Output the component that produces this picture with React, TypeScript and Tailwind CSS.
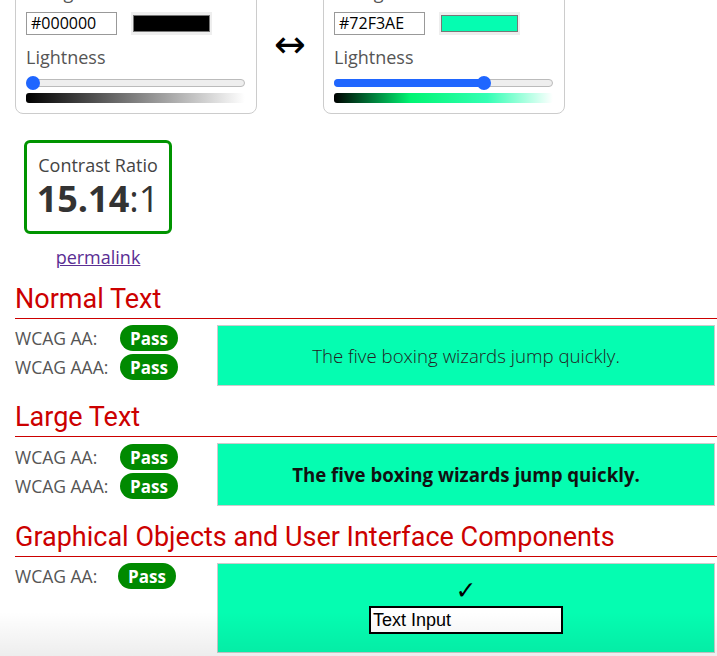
import type { ReactNode } from 'react';

const MINT = '#05fdb1';

function ColorCard({ label, hex, swatch, thumb, filled, gradient }: { label: string; hex: string; swatch: string; thumb: number; filled: boolean; gradient: string }) {
  return (
    <div className="w-[242px] rounded-lg border border-[#cccccc] px-[10px] pb-[10px] pt-[8px]">
      <div className="h-[24px] text-[18px] leading-[24px] text-[#555]">{label}</div>
      <div className="mt-[8px] flex items-center">
        <div className="h-[23px] w-[91px] border border-[#999] pl-[4px] text-[16px] leading-[21px] text-black">{hex}</div>
        <div className="ml-[14px] flex h-[23px] w-[81px] items-center justify-center bg-[#eeeeee]">
          <div className="h-[17px] w-[77px] border border-[#777]" style={{ backgroundColor: swatch }} />
        </div>
      </div>
      <div className="mt-[10px] h-[24px] text-[18px] leading-[24px] text-[#555]">Lightness</div>
      <div className="relative mt-[7px] h-[14px] w-[219px]">
        <div className="absolute left-0 right-0 top-[3px] h-[8px] rounded-full border border-[#bbbbbb] bg-[#eeeeee]" />
        {filled && <div className="absolute left-0 top-[3px] h-[8px] rounded-full bg-[#1f66ff]" style={{ width: thumb }} />}
        <div className="absolute top-0 h-[14px] w-[14px] rounded-full bg-[#1f66ff]" style={{ left: thumb - 7 }} />
      </div>
      <div className="mt-[3px] h-[10px] w-[219px] rounded-[3px]" style={{ background: gradient }} />
    </div>
  );
}

function Heading({ children }: { children: ReactNode }) {
  return (
    <h2 className="border-b border-[#cc0000] pb-[3px] font-['Roboto',sans-serif] text-[27px] font-normal leading-[32px] text-[#cc0000]">
      {children}
    </h2>
  );
}

function Badge() {
  return (
    <span className="flex h-[26px] w-[58px] items-center justify-center rounded-full bg-[#008a00] text-[17px] font-bold leading-none text-white">
      Pass
    </span>
  );
}

function ResultRow({ label, labelWidth = 105 }: { label: string; labelWidth?: number }) {
  return (
    <div className="flex h-[29px] items-start">
      <span className="pt-[2px] text-[17.5px] leading-[22px] text-[#555]" style={{ width: labelWidth }}>
        {label}
      </span>
      <Badge />
    </div>
  );
}

export default function App() {
  return (
    <div className="relative h-[656px] w-[717px] overflow-hidden bg-white font-['Open_Sans',sans-serif]">
      <div className="pl-[15px]">
        <div className="-mt-[29px] flex items-center">
          <ColorCard label="Foreground" hex="#000000" swatch="#000000" thumb={7} filled={false} gradient="linear-gradient(to right, #000000, #ffffff)" />
          <div className="flex w-[66px] justify-center pt-[2px] font-['DejaVu_Sans',sans-serif] text-[38px] leading-none text-black">↔</div>
          <ColorCard label="Background" hex="#72F3AE" swatch={MINT} thumb={150} filled gradient="linear-gradient(to right, #000000, hsl(148 100% 48%), hsl(158 100% 60%) 70%, #ffffff)" />
        </div>

        <div className="ml-[9px] mt-[26px] flex w-[148px] flex-col items-center">
          <div className="flex h-[94px] w-[148px] flex-col items-center rounded-[6px] border-[3px] border-[#009400] pt-[10px] text-[#333]">
            <div className="text-[18px] leading-[24px] text-[#444]">Contrast Ratio</div>
            <div className="text-[36px] leading-[44px]">
              <span className="font-bold">15.14</span>
              <span>:1</span>
            </div>
          </div>
          <a href="#" className="mt-[10px] text-[18px] leading-[26px] text-[#5a2e93] underline">permalink</a>
        </div>

        <div className="mt-[13px]">
          <Heading>Normal Text</Heading>
          <div className="mt-[6px] flex">
            <div className="w-[202px]">
              <ResultRow label="WCAG AA:" />
              <ResultRow label="WCAG AAA:" />
            </div>
            <div className="flex h-[61px] w-[498px] items-center justify-center border border-[#cccccc] text-[18.67px] font-light text-[#222]" style={{ backgroundColor: MINT }}>
              The five boxing wizards jump quickly.
            </div>
          </div>
        </div>

        <div className="mt-[15px]">
          <Heading>Large Text</Heading>
          <div className="mt-[6px] flex">
            <div className="w-[202px] pt-[1px]">
              <ResultRow label="WCAG AA:" />
              <ResultRow label="WCAG AAA:" />
            </div>
            <div className="flex h-[63px] w-[498px] items-center justify-center border border-[#cccccc] text-[18.67px] font-bold text-[#111]" style={{ backgroundColor: MINT }}>
              The five boxing wizards jump quickly.
            </div>
          </div>
        </div>

        <div className="mt-[15px]">
          <Heading>Graphical Objects and User Interface Components</Heading>
          <div className="mt-[6px] flex">
            <div className="w-[202px]">
              <ResultRow label="WCAG AA:" labelWidth={103} />
            </div>
            <div className="flex h-[90px] w-[498px] flex-col items-center border border-[#cccccc] pt-[13px]" style={{ backgroundColor: MINT }}>
              <div className="font-['DejaVu_Sans',sans-serif] text-[25px] leading-[28px] text-black">✓</div>
              <div className="mt-[1px] h-[28px] w-[194px] border-2 border-black bg-white pl-[2px] font-['Liberation_Sans',Arial,sans-serif] text-[18px] leading-[24px] text-black">
                Text Input
              </div>
            </div>
          </div>
        </div>
      </div>
      <div className="pointer-events-none absolute bottom-0 left-0 h-[44px] w-full bg-linear-to-b from-transparent to-black/[0.07]" />
    </div>
  );
}
